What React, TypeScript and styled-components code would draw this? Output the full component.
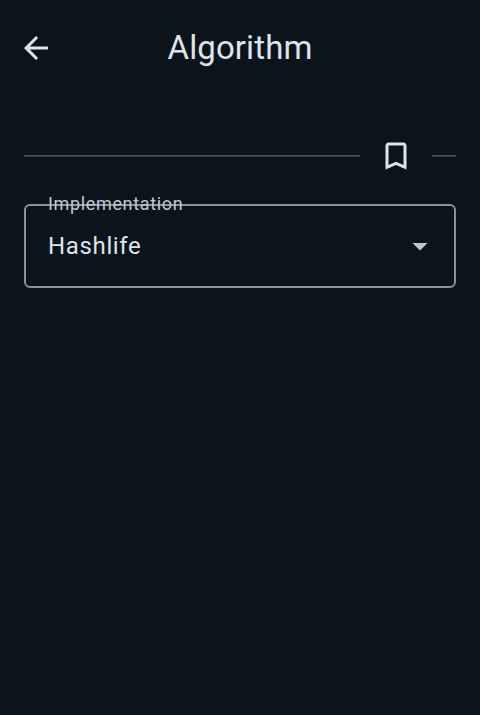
import React from "react";
import styled, { createGlobalStyle } from "styled-components";

const GlobalStyle = createGlobalStyle`
  body { margin: 0; background: #0c141b; }
`;

const Screen = styled.main`
  box-sizing: border-box;
  height: 715px;
  background: #0c141b;
  color: #dee3eb;
  font-family: Roboto, sans-serif;
  overflow: hidden;
`;

const TopBar = styled.header`
  display: grid;
  grid-template-columns: 36px 1fr 36px;
  align-items: center;
  height: 96px;
  padding: 0 18px;
`;

const IconButton = styled.button`
  display: flex;
  align-items: center;
  justify-content: center;
  width: 36px;
  height: 36px;
  padding: 0;
  border: 0;
  background: none;
  color: inherit;
`;

const Title = styled.h1`
  margin: 0;
  font-size: 33px;
  font-weight: 400;
  line-height: 42px;
  letter-spacing: 0.1px;
  text-align: center;
`;

const SectionDivider = styled.div`
  display: flex;
  align-items: center;
  height: 72px;
  margin: 24px 24px 0;
`;

const Rule = styled.span<{ $width?: number }>`
  flex: ${(p) => (p.$width ? `0 0 ${p.$width}px` : "1")};
  height: 2px;
  background: linear-gradient(#50565b 50%, #343b41 50%);
`;

const BookmarkButton = styled(IconButton)`
  margin: 0 18px;
`;

const SelectField = styled.div`
  position: relative;
  box-sizing: border-box;
  display: flex;
  align-items: center;
  justify-content: space-between;
  height: 84px;
  margin: 12px 24px 0;
  padding: 0 16px 0 22px;
  border: 2px solid #8b9198;
  border-radius: 6px;
`;

const FieldLabel = styled.label`
  position: absolute;
  top: -14px;
  left: 22px;
  font-size: 18px;
  line-height: 24px;
  letter-spacing: 0.65px;
  color: #c1c7ce;
`;

const FieldValue = styled.span`
  font-size: 24px;
  line-height: 36px;
  letter-spacing: 0.65px;
`;

export default function App() {
  return (
    <Screen>
      <GlobalStyle />
      <TopBar>
        <IconButton aria-label="Back">
          <svg width="36" height="36" viewBox="0 0 24 24" fill="currentColor">
            <path d="M20 11H7.83l5.59-5.59L12 4l-8 8 8 8 1.41-1.41L7.83 13H20v-2z" />
          </svg>
        </IconButton>
        <Title>Algorithm</Title>
      </TopBar>
      <SectionDivider>
        <Rule />
        <BookmarkButton aria-label="Bookmark">
          <svg width="36" height="36" viewBox="0 0 24 24" fill="currentColor">
            <path d="M17 3H7c-1.1 0-2 .9-2 2v16l7-3 7 3V5c0-1.1-.9-2-2-2zm0 15-5-2.18L7 18V5h10v13z" />
          </svg>
        </BookmarkButton>
        <Rule $width={24} />
      </SectionDivider>
      <SelectField>
        <FieldLabel>Implementation</FieldLabel>
        <FieldValue>Hashlife</FieldValue>
        <svg width="36" height="36" viewBox="0 0 24 24" fill="#c1c7ce">
          <path d="M7 10l5 5 5-5z" />
        </svg>
      </SelectField>
    </Screen>
  );
}
